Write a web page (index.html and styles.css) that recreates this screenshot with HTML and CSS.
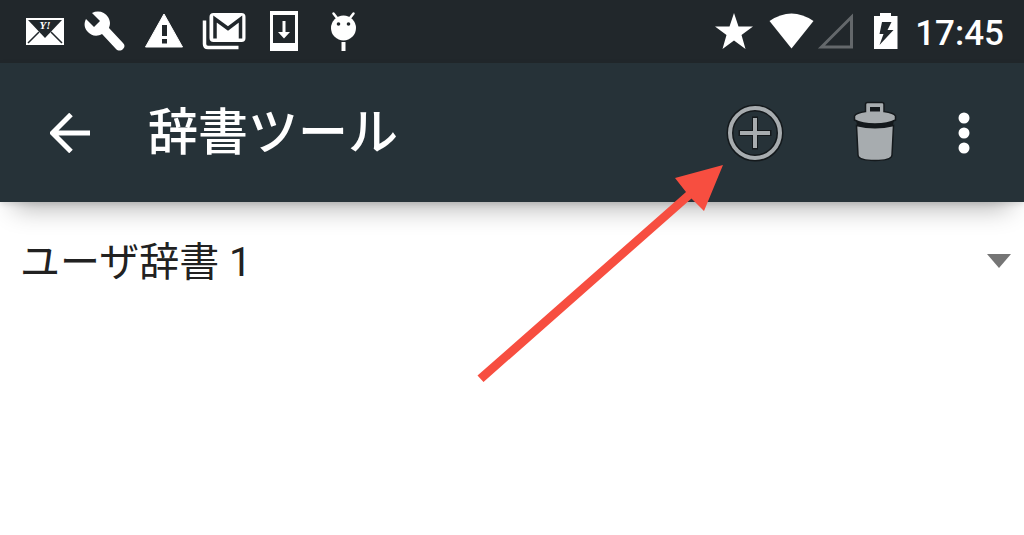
FILE: index.html
```html
<!DOCTYPE html>
<html lang="ja">
<head>
    <meta charset="UTF-8">
    <meta name="viewport" content="width=device-width, initial-scale=1.0">
    <title>辞書ツール</title>
    <link rel="stylesheet" href="styles.css">
</head>
<body>
    <div class="status-bar">
        <div class="notifications">
            <!-- mail -->
            <svg class="icon" viewBox="0 0 60 63">
                <rect x="12" y="18" width="38" height="27" fill="#fff"/>
                <path d="M14 20H48L31 38Z" fill="#21272b"/>
                <path d="M14 43L25 32M48 43L37 32" stroke="#21272b" stroke-width="1.5"/>
                <text class="mail-text" x="31" y="29" text-anchor="middle">Y!</text>
            </svg>
            <!-- wrench -->
            <svg class="icon" viewBox="0 0 60 63">
                <path d="M18 13C24 10 31 12 34 17C37 22 36 25 35 28L49 43C51 45 51 47 49 49C47 51 44 51 42 49L28 34C23 37 17 36 13 31C10 27 10 23 12 19L20 27L26 21Z" fill="#fff"/>
            </svg>
            <!-- warning -->
            <svg class="icon" viewBox="0 0 60 63">
                <path d="M30 14L48.500 47H11.500Z" fill="#fff" stroke="#fff" stroke-width="1" stroke-linejoin="round"/>
                <path d="M28 25H33V36H28ZM28 39H33V43.500H28Z" fill="#21272b"/>
            </svg>
            <!-- gmail -->
            <svg class="icon" viewBox="0 0 60 63">
                <path d="M10.500 20.500V44Q10.500 47.500 14 47.500H44.500" fill="none" stroke="#fff" stroke-width="3.500"/>
                <rect x="15.500" y="13" width="36" height="29" rx="4" fill="#fff"/>
                <path d="M21 38.500V19L34 28.500L46.500 19V38.500" fill="none" stroke="#21272b" stroke-width="3.500"/>
            </svg>
            <!-- download -->
            <svg class="icon" viewBox="0 0 60 63">
                <path d="M16 11H44V51H16ZM19 15V43H41V15Z" fill="#fff" fill-rule="evenodd"/>
                <path d="M28.500 21H31.500V32H36L30 38.500L24 32H28.500Z" fill="#fff"/>
            </svg>
            <!-- android -->
            <svg class="icon" viewBox="0 0 60 63">
                <path d="M19.500 13.500L23 18M39.500 13.500L36 18" stroke="#fff" stroke-width="2.500" stroke-linecap="round"/>
                <circle cx="29.500" cy="28" r="12.500" fill="#fff"/>
                <circle cx="24.500" cy="24" r="1.800" fill="#21272b"/>
                <circle cx="34.500" cy="24" r="1.800" fill="#21272b"/>
                <rect x="27.500" y="42" width="4" height="9" fill="#fff"/>
            </svg>
        </div>
        <div class="system">
            <svg class="icon-system" viewBox="0 0 192 63">
                <!-- star -->
                <path d="M23 13L27.500 26.500H42L30.500 35L34.500 49L23 40.500L11.500 49L15.500 35L4 26.500H18.500Z" fill="#fff"/>
                <!-- wifi -->
                <path d="M58.500 21Q80.500 6 102.500 21L80.500 48.500Z" fill="#fff"/>
                <!-- signal -->
                <path d="M110.500 47L140.500 17V47Z" fill="none" stroke="#64686b" stroke-width="3"/>
                <!-- battery -->
                <path d="M169 13H180V16H186.500V49H163V16H169Z" fill="#fff"/>
                <path d="M171 22H180.500L176.500 30H182.500L168.500 45L172.500 34H168.500Z" fill="#21272b"/>
            </svg>
            <span class="clock">17:45</span>
        </div>
    </div>

    <header class="toolbar">
        <button class="btn btn-back" type="button" aria-label="戻る">
            <svg viewBox="0 0 40 40" width="40" height="40">
                <path d="M40 20H4M21 1.500L2.500 20L21 38.500" fill="none" stroke="#fff" stroke-width="5"/>
            </svg>
        </button>
        <h1>辞書ツール</h1>
        <div class="action">
            <button class="btn btn-action" type="button" aria-label="追加">
                <svg viewBox="0 0 60 60" width="60" height="60">
                    <g fill="none" stroke="#14191c">
                        <circle cx="31" cy="30" r="25" stroke-width="7"/>
                        <path d="M14.500 30H47.500M31 13.500V46.500" stroke-width="6"/>
                    </g>
                    <g fill="none" stroke="#a7acaf">
                        <circle cx="31" cy="30" r="25" stroke-width="4"/>
                        <path d="M16 30H46M31 15V45" stroke-width="4"/>
                    </g>
                </svg>
            </button>
            <svg class="pointer" viewBox="0 0 252 222" width="252" height="222">
                <path d="M249 2L230 48L217.500 35.500L9.500 219L3.500 212.500L212 29L201 15Z" fill="#f74e40"/>
            </svg>
        </div>
        <button class="btn btn-action" type="button" aria-label="削除">
            <svg viewBox="0 0 60 60" width="60" height="60" overflow="visible">
                <path d="M12 17H50L48 28H14Z" fill="#14191c"/>
                <g fill="#a7acaf" stroke="#14191c" stroke-width="1.500">
                    <path d="M12.500 22.500Q31 27 49.500 22.500L48 52Q47.500 57.500 31 57.500Q14.500 57.500 14 52Z"/>
                    <path d="M21.500 8.500V1.500Q21.500 -0.500 23.500 -0.500H38Q40 -0.500 40 1.500V8.500Q50 10 51.500 13V17Q44 21 31 21Q18 21 10.500 17V13Q12 10 21.500 8.500Z"/>
                </g>
                <path d="M26 4H36V8.500H26Z" fill="#14191c"/>
            </svg>
        </button>
        <button class="btn btn-more" type="button" aria-label="メニュー">
            <svg viewBox="0 0 12 42" width="12" height="42">
                <g fill="#fff">
                    <circle cx="6" cy="6" r="5.500"/>
                    <circle cx="6" cy="21" r="5.500"/>
                    <circle cx="6" cy="36" r="5.500"/>
                </g>
            </svg>
        </button>
    </header>

    <main>
        <div class="spinner">
            <select aria-label="辞書">
                <option>ユーザ辞書 1</option>
            </select>
        </div>
    </main>
</body>
</html>
```

FILE: styles.css
```css
:root {
    --status-color: #21272b;
    --toolbar-color: #263238;
    --text-color: #212121;
    --arrow-color: #757575;
}

* {
    margin: 0;
    padding: 0;
    box-sizing: border-box;
}

body {
    min-height: 100vh;
    font-family: Roboto, 'Noto Sans CJK JP', sans-serif;
    background-color: #fff;
    color: var(--text-color);
}

svg {
    display: block;
}

.status-bar {
    display: flex;
    justify-content: space-between;
    height: 63px;
    padding: 0 20px 0 14px;
    background-color: var(--status-color);
}

.notifications,
.system {
    display: flex;
    align-items: center;
}

.system {
    gap: 12px;
}

.icon {
    width: 60px;
    height: 63px;
}

.icon-system {
    width: 192px;
    height: 63px;
}

.mail-text {
    font-family: 'Liberation Serif', serif;
    font-size: 11px;
    font-weight: bold;
    font-style: italic;
    fill: #fff;
}

.clock {
    padding-top: 4px;
    color: #fff;
    font-size: 35px;
    font-weight: 500;
    line-height: 40px;
}

.toolbar {
    position: relative;
    display: flex;
    align-items: center;
    height: 139px;
    padding-right: 30px;
    background-color: var(--toolbar-color);
    box-shadow: 0 2px 6px rgba(0, 0, 0, 0.12), 0 20px 24px -14px rgba(0, 0, 0, 0.3);
}

.toolbar h1 {
    flex: 1;
    color: #fff;
    font-size: 50px;
    font-weight: 500;
    line-height: 72px;
}

.btn {
    display: flex;
    align-items: center;
    justify-content: center;
    background: none;
    border: none;
    cursor: pointer;
}

.btn-back {
    width: 140px;
    height: 80px;
}

.btn-back + h1 {
    padding-left: 8px;
}

.action {
    position: relative;
}

.btn-action {
    width: 120px;
    height: 80px;
}

.btn-more {
    width: 60px;
    height: 80px;
}

/* red arrow pointing at the add button */
.pointer {
    position: absolute;
    top: 70px;
    right: 88px;
    pointer-events: none;
}

.spinner {
    position: relative;
    padding: 31px 0;
}

.spinner select {
    display: block;
    width: 100%;
    height: 60px;
    padding: 0 50px 0 20px;
    border: none;
    background: none;
    appearance: none;
    color: var(--text-color);
    font-family: inherit;
    font-size: 40px;
    line-height: 60px;
}

.spinner::after {
    content: '';
    position: absolute;
    top: 52px;
    right: 13px;
    border: 12px solid transparent;
    border-top: 14px solid var(--arrow-color);
    border-bottom: none;
    pointer-events: none;
}
```
